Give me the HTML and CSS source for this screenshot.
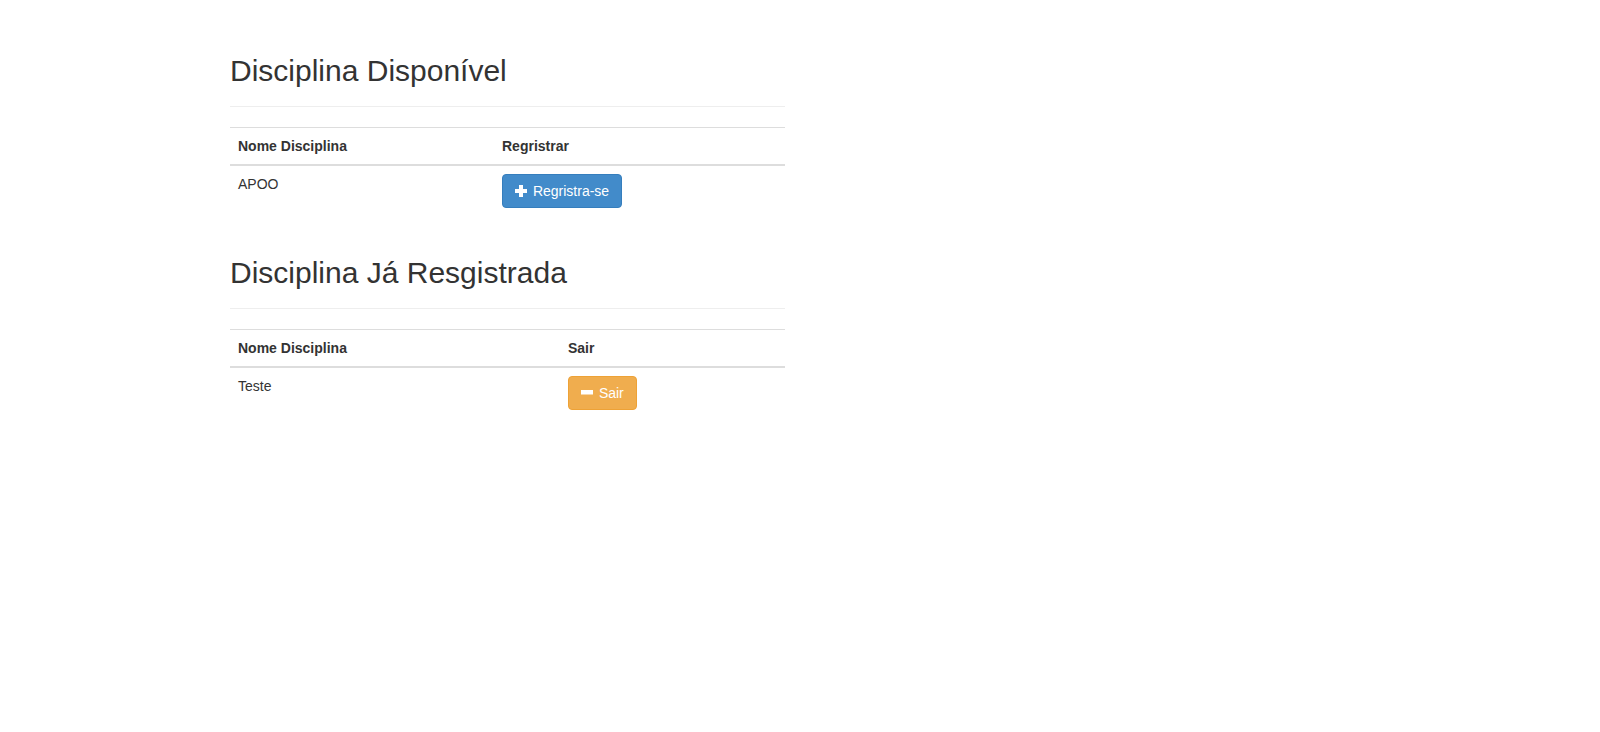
FILE: index.html
```html
<!DOCTYPE html>
<html lang="pt">
<head>
<meta charset="utf-8">
<title>Disciplinas</title>
<link rel="stylesheet" href="styles.css">
</head>
<body>
<div class="container">
  <div class="row">
    <div class="col-half">
      <div class="page-header"><h2>Disciplina Disponível</h2></div>
      <table class="table">
        <thead>
          <tr><th class="name-available">Nome Disciplina</th><th>Regristrar</th></tr>
        </thead>
        <tbody>
          <tr>
            <td>APOO</td>
            <td><a class="btn btn-primary" href="#"><svg class="icon" width="12" height="12" viewBox="0 0 12 12"><rect x="4" y="0" width="4" height="12" fill="#fff"/><rect x="0" y="4" width="12" height="4" fill="#fff"/></svg> Regristra-se</a></td>
          </tr>
        </tbody>
      </table>

      <div class="page-header"><h2>Disciplina Já Resgistrada</h2></div>
      <table class="table">
        <thead>
          <tr><th class="name-registered">Nome Disciplina</th><th>Sair</th></tr>
        </thead>
        <tbody>
          <tr>
            <td>Teste</td>
            <td><a class="btn btn-warning" href="#"><svg class="icon" width="12" height="12" viewBox="0 0 12 12"><rect x="0" y="3" width="12" height="4.5" fill="#fff"/></svg> Sair</a></td>
          </tr>
        </tbody>
      </table>
    </div>
  </div>
</div>
</body>
</html>
```
FILE: styles.css
```css
html, body {
  margin: 0;
  padding: 0;
  background: #fff;
}
body {
  font-family: "Liberation Sans", Arial, Helvetica, sans-serif;
  font-size: 14px;
  line-height: 1.42857143;
  color: #333;
}
.container {
  width: 1170px;
  margin: 0 auto;
  padding: 14px 15px 0;
  box-sizing: border-box;
}
.row {
  display: flex;
  margin: 0 -15px;
}
.col-half {
  width: 50%;
  padding: 0 15px;
  box-sizing: border-box;
}
.page-header {
  margin: 40px 0 20px;
  padding-bottom: 9px;
  border-bottom: 1px solid #eee;
}
.page-header h2 {
  margin: 20px 0 10px;
  font-size: 30px;
  font-weight: 500;
  line-height: 1.1;
  color: inherit;
}
.table {
  width: 100%;
  max-width: 100%;
  margin-bottom: 20px;
  border-collapse: collapse;
  border-spacing: 0;
}
.table th {
  text-align: left;
  font-weight: bold;
  padding: 8px;
  line-height: 1.42857143;
  vertical-align: bottom;
  border-top: 1px solid #ddd;
  border-bottom: 2px solid #ddd;
}
.table td {
  padding: 8px;
  line-height: 1.42857143;
  vertical-align: top;
  border-top: 1px solid #ddd;
}
.table th.name-available {
  width: 248px;
}
.table th.name-registered {
  width: 314px;
}
.btn {
  display: inline-block;
  padding: 6px 12px;
  font-size: 14px;
  line-height: 1.42857143;
  border: 1px solid transparent;
  border-radius: 4px;
  color: #fff;
  text-decoration: none;
  white-space: nowrap;
  vertical-align: middle;
}
.btn-primary {
  background-color: #428bca;
  border-color: #357ebd;
}
.btn-warning {
  background-color: #f0ad4e;
  border-color: #eea236;
}
.icon {
  display: inline-block;
  vertical-align: -1px;
  margin-right: 2px;
}
```
